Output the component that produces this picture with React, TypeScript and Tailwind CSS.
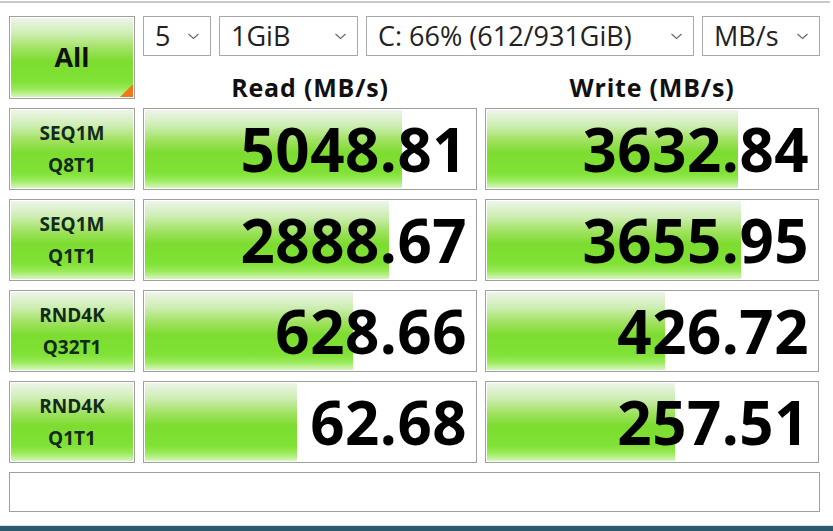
import React from "react";

const ROWS = [
  { a: "SEQ1M", b: "Q8T1", read: "5048.81", rp: 78, write: "3632.84", wp: 76 },
  { a: "SEQ1M", b: "Q1T1", read: "2888.67", rp: 74, write: "3655.95", wp: 77 },
  { a: "RND4K", b: "Q32T1", read: "628.66", rp: 63, write: "426.72", wp: 54 },
  { a: "RND4K", b: "Q1T1", read: "62.68", rp: 46, write: "257.51", wp: 57 },
];

const green =
  "bg-[linear-gradient(to_bottom,#eef4ea_0%,#cdeeb2_20%,#a2e263_38%,#7ddc30_55%,#80e236_80%,#9aea5a_90%,#d6f6bd_100%)]";

function Chevron() {
  return (
    <svg width="13" height="8" viewBox="0 0 13 8" className="shrink-0">
      <path d="M1.5 2 L6.5 6.5 L11.5 2" fill="none" stroke="#666" strokeWidth="1.1" />
    </svg>
  );
}

function Select({ w, text }: { w: string; text: string }) {
  return (
    <div className={`${w} h-[40px] border border-[#a8a8a8] bg-white flex items-center justify-between pl-[11px] pr-[10px]`}>
      <span className="text-[27px] leading-[34px] text-[#222]">{text}</span>
      <Chevron />
    </div>
  );
}

function Cell({ value, pct }: { value: string; pct: number }) {
  return (
    <div className="relative h-[82px] border border-[#a0a0a0] bg-white p-px">
      <div className="relative h-full w-full">
        <div className={`absolute inset-y-0 left-0 ${green}`} style={{ width: `${pct}%` }} />
        <div className="relative h-full flex items-center justify-end pr-[8px] text-[60px] font-bold leading-[72px] text-black tracking-[0.5px]">
          {value}
        </div>
      </div>
    </div>
  );
}

export default function App() {
  return (
    <div className="w-[833px] h-[531px] bg-white flex flex-col overflow-hidden" style={{ fontFamily: '"Open Sans", "Noto Sans", sans-serif' }}>
      <div className="h-[1px]" />
      <div className="h-[2px] w-[830px] bg-[#c9c9c9]" />
      <div className="pl-[9px] pt-[13px] flex flex-col gap-[9px]">
        {/* top block */}
        <div className="flex gap-[8px] h-[83px]">
          <div className="relative w-[126px] h-[83px] border border-[#a0a0a0] bg-white p-px">
            <div className={`h-full w-full ${green} flex items-center justify-center`}>
              <span className="text-[27px] font-bold text-[#111]">All</span>
            </div>
            <div className="absolute right-[1px] bottom-[1px] w-0 h-0 border-l-[13px] border-l-transparent border-b-[13px] border-b-[#f07818]" />
          </div>
          <div className="flex flex-col">
            <div className="flex gap-[8px]">
              <Select w="w-[68px]" text="5" />
              <Select w="w-[139px]" text="1GiB" />
              <Select w="w-[328px]" text="C: 66% (612/931GiB)" />
              <Select w="w-[118px]" text="MB/s" />
            </div>
            <div className="flex gap-[8px] pt-[17px]">
              <div className="w-[334px] text-center text-[25px] leading-[28px] font-bold text-[#111] tracking-[0.8px]">Read (MB/s)</div>
              <div className="w-[334px] text-center text-[25px] leading-[28px] font-bold text-[#111] tracking-[0.8px]">Write (MB/s)</div>
            </div>
          </div>
        </div>

        {ROWS.map((r, i) => (
          <div key={i} className="grid grid-cols-[126px_334px_334px] gap-[8px]">
            <div className="h-[82px] border border-[#a0a0a0] bg-white p-px">
              <div className={`h-full w-full ${green} flex flex-col items-center justify-center gap-[6px] text-[19px] font-bold text-[#13291a] leading-[26px]`}>
                <span>{r.a}</span>
                <span>{r.b}</span>
              </div>
            </div>
            <Cell value={r.read} pct={r.rp} />
            <Cell value={r.write} pct={r.wp} />
          </div>
        ))}

        <div className="w-[811px] h-[40px] border border-[#a0a0a0] bg-white" />
      </div>
      <div className="flex-1" />
      <div className="h-[1px] bg-[#d8e4e8]" />
      <div className="h-[5px] bg-[#2b5a6c]" />
    </div>
  );
}
